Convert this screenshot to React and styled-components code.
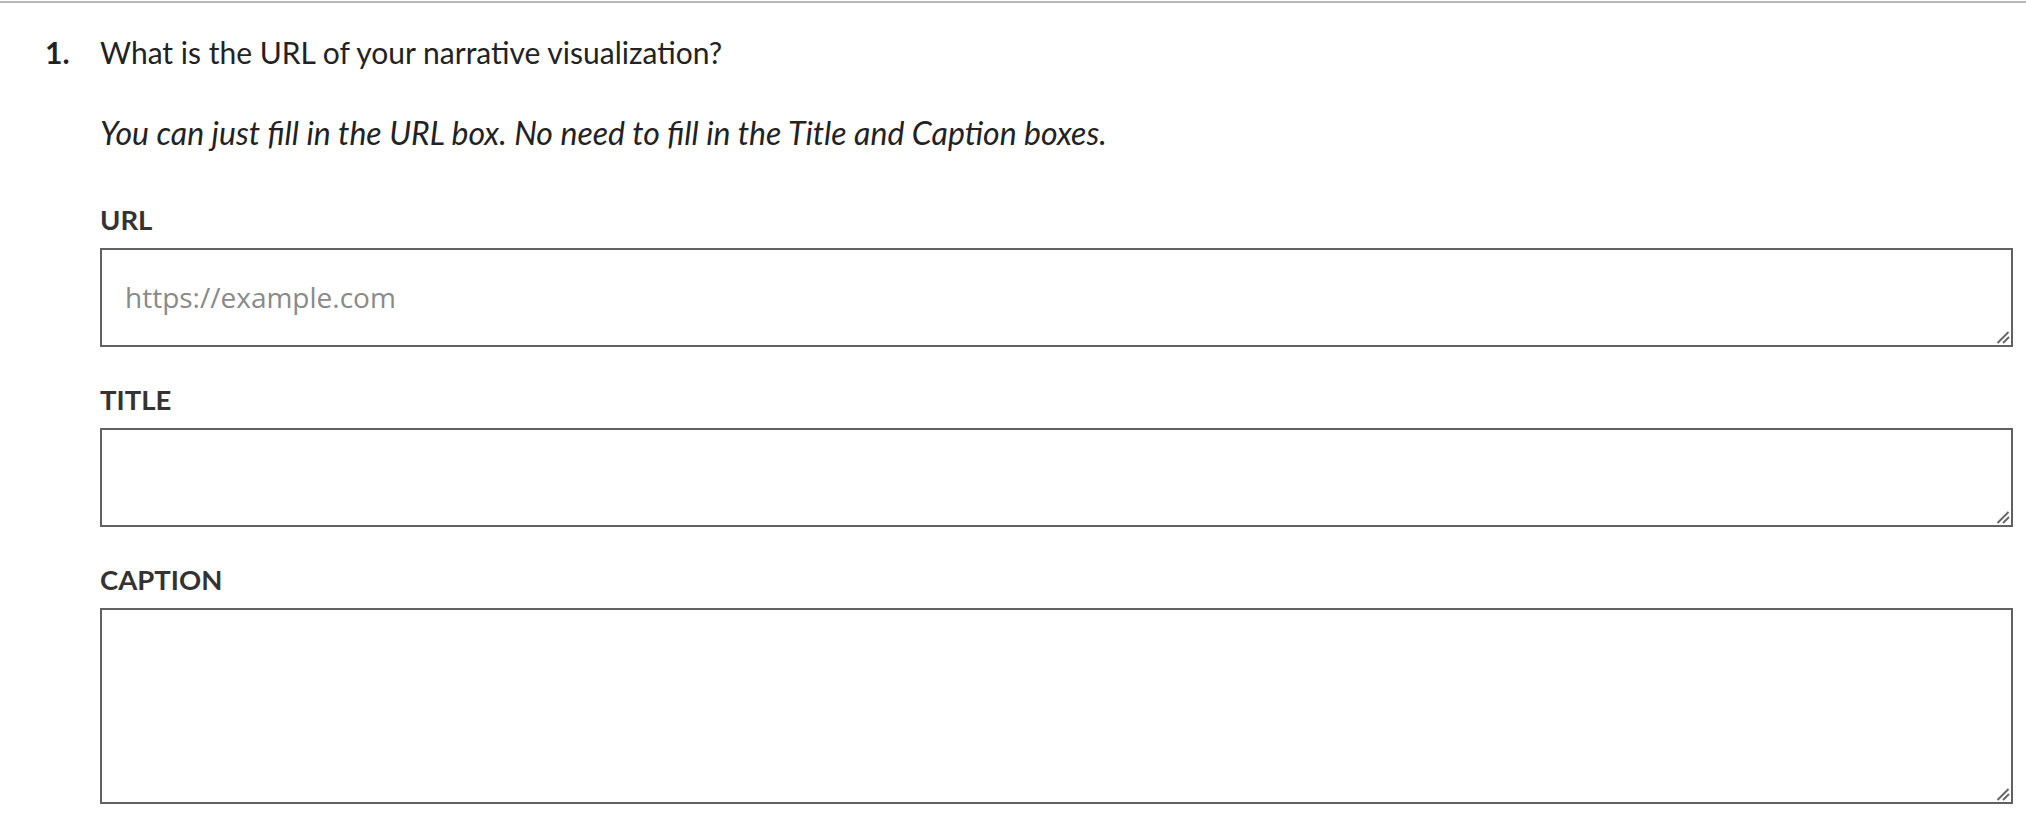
import React from "react";
import styled, { createGlobalStyle } from "styled-components";

const Global = createGlobalStyle`
  html, body { margin: 0; padding: 0; background: #fff; }
  body { font-family: Lato, "Liberation Sans", sans-serif; color: #222; }
`;

const Page = styled.div`
  border-top: 2px solid #b8b8b8;
  margin-top: 1px;
  padding: 30px 13px 30px 45px;
`;

const Question = styled.div`
  display: flex;
  align-items: flex-start;
`;

const Number = styled.div`
  width: 55px;
  flex: none;
  font-size: 30px;
  line-height: 39px;
  font-weight: 700;
  color: #222;
`;

const Body = styled.div`
  flex: 1;
  min-width: 0;
`;

const Prompt = styled.div`
  font-size: 30px;
  line-height: 39px;
  color: #222;
`;

const Hint = styled.div`
  font-size: 32px;
  line-height: 38px;
  font-style: italic;
  margin-top: 42px;
  margin-bottom: 51px;
  color: #222;
`;

const Field = styled.div`
  display: flex;
  flex-direction: column;
  & + & {
    margin-top: 36px;
  }
`;

const Label = styled.label`
  font-size: 27.5px;
  line-height: 33px;
  font-weight: 700;
  color: #333;
  margin-bottom: 12px;
`;

const BoxWrap = styled.div`
  position: relative;
`;

const Box = styled.textarea`
  box-sizing: border-box;
  display: block;
  width: 100%;
  height: ${(p) => p.$h}px;
  border: 2px solid #616161;
  border-radius: 0;
  padding: 28px 23px;
  font-family: "Open Sans", sans-serif;
  font-size: 28px;
  line-height: 38px;
  color: #222;
  background: #fff;
  margin: 0;
  resize: none;
  outline: none;
  &::placeholder {
    color: #8a8a8a;
  }
`;

const Grip = styled.svg`
  position: absolute;
  right: 3px;
  bottom: 3px;
  width: 14px;
  height: 14px;
  pointer-events: none;
`;

function TextBox({ h, placeholder }) {
  return (
    <BoxWrap>
      <Box $h={h} placeholder={placeholder} />
      <Grip viewBox="0 0 14 14">
        <line x1="1.5" y1="13" x2="12.5" y2="2" stroke="#666" strokeWidth="2" />
        <line x1="7" y1="13" x2="13" y2="7" stroke="#666" strokeWidth="2" />
      </Grip>
    </BoxWrap>
  );
}

export default function App() {
  return (
    <>
      <Global />
      <Page>
        <Question>
          <Number>1.</Number>
          <Body>
            <Prompt>What is the URL of your narrative visualization?</Prompt>
            <Hint>You can just fill in the URL box. No need to fill in the Title and Caption boxes.</Hint>
            <Field>
              <Label>URL</Label>
              <TextBox h={99} placeholder="https://example.com" />
            </Field>
            <Field>
              <Label>TITLE</Label>
              <TextBox h={99} />
            </Field>
            <Field>
              <Label>CAPTION</Label>
              <TextBox h={196} />
            </Field>
          </Body>
        </Question>
      </Page>
    </>
  );
}
